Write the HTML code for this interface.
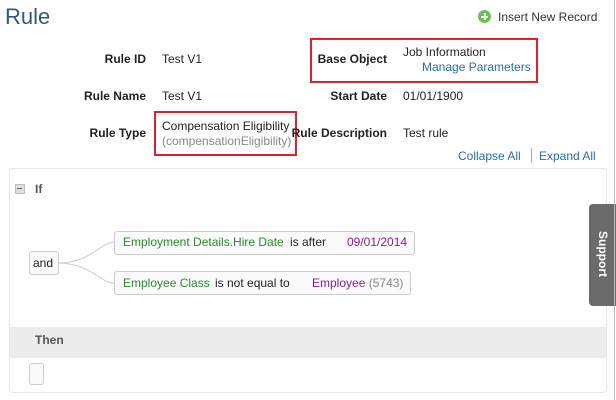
<!DOCTYPE html>
<html><head><style>
body{margin:0;width:616px;height:400px;background:#fff;font-family:"Liberation Sans",sans-serif;font-size:12px;color:#222;position:relative;overflow:hidden}
.a{position:absolute;white-space:nowrap}
.lbl{font-weight:bold;text-align:right}
.link{color:#2a6ca8}
.red{position:absolute;border:2px solid #e2202c}
.box{position:absolute;border:1px solid #ccc;border-radius:3px;background:#fafafa;box-sizing:border-box}
.g{color:#2a8a2a}.p{color:#8c1d8c}.gr{color:#888}
</style></head><body>
<div class="a" style="left:5px;top:4px;font-size:22px;color:#2d5b7c">Rule</div>
<div class="a" style="left:478px;top:10px;width:13px;height:13px;border-radius:50%;background:#6fbf58"></div>
<div class="a" style="left:481px;top:15.5px;width:7px;height:2px;background:#fff"></div>
<div class="a" style="left:483.5px;top:13px;width:2px;height:7px;background:#fff"></div>
<div class="a" style="left:498px;top:10px;color:#333">Insert New Record</div>

<div class="a lbl" style="right:470px;top:52px">Rule ID</div>
<div class="a" style="left:162px;top:52px">Test V1</div>
<div class="a lbl" style="right:470px;top:89px">Rule Name</div>
<div class="a" style="left:162px;top:89px">Test V1</div>
<div class="a lbl" style="right:470px;top:126px">Rule Type</div>
<div class="a" style="left:162px;top:119px">Compensation Eligibility</div>
<div class="a gr" style="left:162px;top:134px">(compensationEligibility)</div>
<div class="red" style="left:154px;top:111px;width:139px;height:41px"></div>

<div class="a lbl" style="right:229px;top:52px">Base Object</div>
<div class="a" style="left:403px;top:45px">Job Information</div>
<div class="a link" style="left:422px;top:60px">Manage Parameters</div>
<div class="red" style="left:310px;top:38px;width:224px;height:41px"></div>
<div class="a lbl" style="right:229px;top:89px">Start Date</div>
<div class="a" style="left:403px;top:89px">01/01/1900</div>
<div class="a lbl" style="right:229px;top:126px">Rule Description</div>
<div class="a" style="left:403px;top:126px">Test rule</div>

<div class="a link" style="left:458px;top:149px">Collapse All</div>
<div class="a" style="left:531px;top:148px;width:1px;height:15px;background:#aaa"></div>
<div class="a link" style="left:539px;top:149px">Expand All</div>

<div class="a" style="left:9px;top:168px;width:596px;height:223px;border:1px solid #e6e6e6;border-radius:4px"></div>
<div class="a" style="left:15px;top:184px;width:8px;height:8px;background:#ddd;border:1px solid #bbb"></div>
<div class="a" style="left:17px;top:188px;width:5px;height:1px;background:#666"></div>
<div class="a" style="left:35px;top:182px;font-weight:bold;color:#555">If</div>

<svg class="a" style="left:0;top:0" width="616" height="400"><path d="M58 263 C90 263 100 243 114 242 M58 263 C90 263 100 283 114 283" stroke="#ccc" fill="none"/></svg>
<div class="box" style="left:29px;top:251px;width:30px;height:24px"></div>
<div class="a" style="left:33px;top:256px">and</div>
<div class="box" style="left:114px;top:231px;width:301px;height:24px"></div>
<div class="a g" style="left:123px;top:235px">Employment Details.Hire Date</div>
<div class="a" style="left:290px;top:235px">is after</div>
<div class="a p" style="left:347px;top:235px">09/01/2014</div>
<div class="box" style="left:114px;top:271px;width:297px;height:24px"></div>
<div class="a g" style="left:123px;top:276px">Employee Class</div>
<div class="a" style="left:215px;top:276px">is not equal to</div>
<div class="a" style="left:312px;top:276px"><span class="p">Employee</span> <span class="gr">(5743)</span></div>

<div class="a" style="left:10px;top:327px;width:596px;height:31px;background:#ececec"></div>
<div class="a" style="left:35px;top:333px;font-weight:bold;color:#555">Then</div>
<div class="box" style="left:29px;top:363px;width:15px;height:22px"></div>

<div class="a" style="left:589px;top:204px;width:30px;height:102px;background:#6b6b6b;border-radius:4px 0 0 4px"></div>
<div class="a" style="left:596px;top:231px;color:#fff;font-weight:bold;writing-mode:vertical-rl">Support</div>
<div class="a" style="left:614px;top:0;width:1px;height:400px;background:#bbb"></div>
</body></html>
